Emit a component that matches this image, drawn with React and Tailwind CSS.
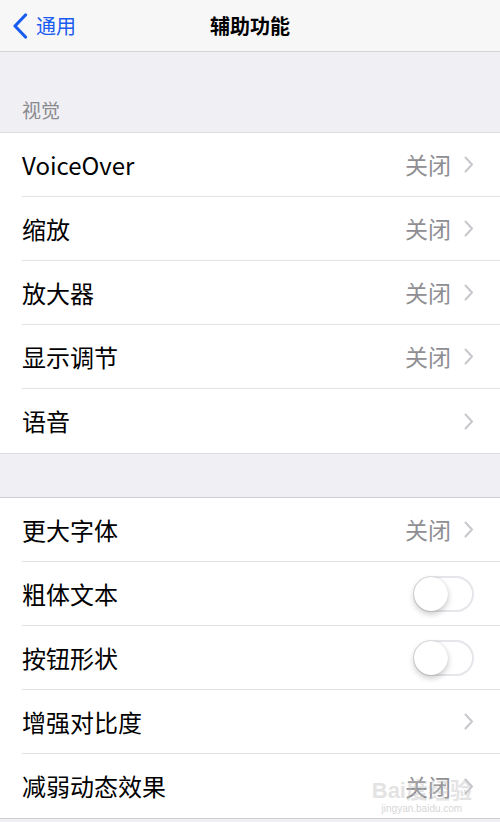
const font = { fontFamily: '"Noto Sans CJK SC", "Liberation Sans", sans-serif' };

function Chevron() {
  return (
    <svg width="10" height="17" viewBox="0 0 10 17" className="ml-[13px]">
      <path d="M1.5 1.5 L8 8.5 L1.5 15.5" fill="none" stroke="#c7c7cc" strokeWidth="2" strokeLinecap="round" strokeLinejoin="round" />
    </svg>
  );
}

function Toggle() {
  return (
    <div className="relative w-[61px] h-[36px] rounded-full border-2 border-[#e5e5ea] bg-white">
      <div className="absolute left-[-1px] top-[-1px] w-[34px] h-[34px] rounded-full bg-white shadow-[0_3px_6px_rgba(0,0,0,0.22),0_0_1px_rgba(0,0,0,0.2)]" />
    </div>
  );
}

function Row({ label, value, toggle, last }) {
  return (
    <div className="flex items-stretch pl-[22px] bg-white h-[64px]">
      <div className={"flex flex-1 items-center pr-[26px] " + (last ? "" : "border-b border-[#e3e3e6]")}>
        <span className="flex-1 text-[24px] text-black">{label}</span>
        {toggle ? (
          <Toggle />
        ) : (
          <div className="flex items-center">
            {value && <span className="text-[23px] text-[#8e8e93]">{value}</span>}
            <Chevron />
          </div>
        )}
      </div>
    </div>
  );
}

export default function App() {
  return (
    <div className="w-[500px] h-[822px] bg-[#efeff4] overflow-hidden relative" style={font}>
      <div className="relative h-[52px] bg-[#f7f7f7] border-b border-[#d4d4d7] flex items-center">
        <div className="flex items-center pl-[12px] text-[#1a5cf0]">
          <svg width="16" height="26" viewBox="0 0 16 26">
            <path d="M13.5 2 L3 13 L13.5 24" fill="none" stroke="#1a5cf0" strokeWidth="3.2" strokeLinecap="round" strokeLinejoin="round" />
          </svg>
          <span className="ml-[8px] text-[20px]">通用</span>
        </div>
        <div className="absolute inset-0 flex items-center justify-center pointer-events-none">
          <span className="text-[20px] font-bold text-black">辅助功能</span>
        </div>
      </div>

      <div className="h-[80px] flex items-end pl-[22px] pb-[8px]">
        <span className="text-[19px] text-[#8a8a8f]">视觉</span>
      </div>

      <div className="border-t border-b border-[#dcdce0]">
        <Row label="VoiceOver" value="关闭" />
        <Row label="缩放" value="关闭" />
        <Row label="放大器" value="关闭" />
        <Row label="显示调节" value="关闭" />
        <Row label="语音" last />
      </div>

      <div className="h-[43px]" />

      <div className="border-t border-b border-[#cfcfd3]">
        <Row label="更大字体" value="关闭" />
        <Row label="粗体文本" toggle />
        <Row label="按钮形状" toggle />
        <Row label="增强对比度" />
        <Row label="减弱动态效果" value="关闭" last />
      </div>

      <div className="absolute right-[28px] bottom-[8px] flex flex-col items-center opacity-40 pointer-events-none">
        <span className="text-[22px] font-bold text-[#bbb] leading-none" style={{ fontFamily: '"Liberation Sans", "Noto Sans CJK SC", sans-serif' }}>Bai度经验</span>
        <span className="text-[10px] text-[#999] leading-none mt-[2px]" style={{ fontFamily: '"Liberation Sans", sans-serif' }}>jingyan.baidu.com</span>
      </div>
    </div>
  );
}
